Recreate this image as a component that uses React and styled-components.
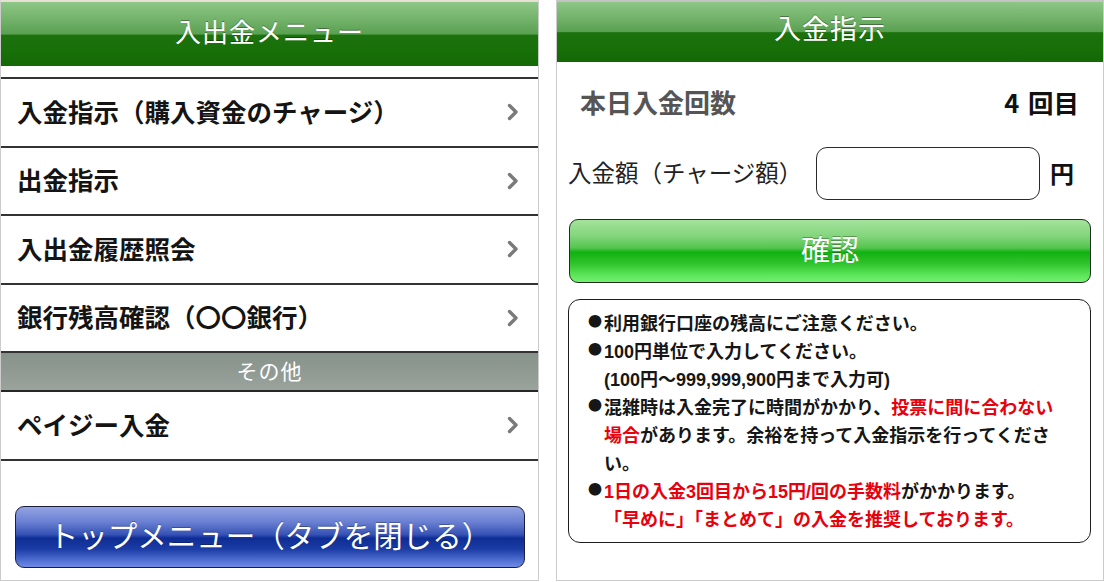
import React from 'react';
import styled, { createGlobalStyle } from 'styled-components';

const GlobalStyle = createGlobalStyle`
  html, body {
    margin: 0;
    padding: 0;
    background: #ffffff;
  }
  body {
    font-family: "Liberation Sans", "Noto Sans CJK JP", sans-serif;
    color: #111111;
  }
`;

const Page = styled.div`
  display: flex;
  gap: 17px;
  width: 1104px;
  height: 582px;
  overflow: hidden;
`;

const Panel = styled.section`
  width: ${props => props.$width}px;
  height: 581px;
  box-sizing: border-box;
  border: 1px solid #cccccc;
  border-top: 2px solid ${props => props.$topColor};
  display: flex;
  flex-direction: column;
  background: #ffffff;
`;

const GreenHeader = styled.header`
  height: ${props => props.$height}px;
  box-sizing: border-box;
  padding-bottom: ${props => props.$lift}px;
  flex-shrink: 0;
  display: flex;
  align-items: center;
  justify-content: center;
  background: linear-gradient(
    to bottom,
    #8dc686 0%,
    #72b26a 28%,
    #5aa052 50%,
    #1c720d 52%,
    #187009 78%,
    #146806 100%
  );
  border-bottom: ${props => (props.$line ? '1px solid #3d4a3a' : 'none')};
  color: #ffffff;
  font-family: "Noto Sans CJK JP", sans-serif;
  font-size: ${props => props.$size}px;
  font-weight: 400;
  text-shadow: 0 -1px 0 rgba(0, 0, 0, 0.35);
  letter-spacing: 1px;
`;

const MenuList = styled.nav`
  margin-top: 11px;
  border-top: 2px solid #333333;
  display: flex;
  flex-direction: column;
`;

const MenuRow = styled.div`
  height: 66.5px;
  box-sizing: content-box;
  border-bottom: 2px solid #333333;
  display: flex;
  align-items: center;
  justify-content: space-between;
  padding: 0 19px 0 16px;
  font-family: "Noto Sans CJK JP", sans-serif;
  font-size: 25.5px;
  font-weight: 700;
  color: #141414;

  & > span {
    margin-top: -4px;
  }
`;

const SectionBar = styled.div`
  height: 39px;
  box-sizing: border-box;
  padding-bottom: 3px;
  display: flex;
  align-items: center;
  justify-content: center;
  border-bottom: 2px solid #262626;
  background: linear-gradient(to bottom, #87928b 0%, #909a93 50%, #9aa39c 100%);
  color: #ffffff;
  font-family: "Noto Sans CJK JP", sans-serif;
  font-size: 21px;
  letter-spacing: 1px;
`;

const BlueButton = styled.button`
  margin: 45px 13px 0 14px;
  height: 62px;
  border: 1px solid #1c1f3c;
  border-radius: 9px;
  background: linear-gradient(
    to bottom,
    #93a3e3 0%,
    #6a80d2 25%,
    #3552b4 46%,
    #0e2d94 52%,
    #1b3ca5 70%,
    #4d6cd0 88%,
    #6e8ce6 100%
  );
  color: #ffffff;
  font-family: "Noto Sans CJK JP", sans-serif;
  font-size: 29.5px;
  font-weight: 400;
  text-shadow: 0 -1px 0 rgba(0, 0, 0, 0.3);
  cursor: pointer;
  padding: 0 0 6px;
`;

const Body = styled.div`
  display: flex;
  flex-direction: column;
  padding: 0 12px 0 11px;
`;

const CountRow = styled.div`
  margin-top: 24px;
  height: 30px;
  display: flex;
  align-items: center;
  justify-content: space-between;
  padding: 0 12px 4px 12px;
  font-family: "Noto Sans CJK JP", sans-serif;
  font-size: 26px;
  font-weight: 700;
`;

const CountLabel = styled.span`
  color: #555555;
`;

const CountValue = styled.span`
  color: #111111;
  font-size: 25.5px;
  word-spacing: 3px;
`;

const AmountRow = styled.div`
  margin-top: 27px;
  height: 53px;
  display: flex;
  align-items: center;
  font-family: "Noto Sans CJK JP", sans-serif;
  font-size: 23.5px;
  color: #222222;
`;

const AmountLabel = styled.span`
  width: 248px;
  margin-top: -4px;
`;

const AmountInput = styled.input`
  width: 224px;
  height: 53px;
  box-sizing: border-box;
  border: 1.5px solid #2a2a2a;
  border-radius: 11px;
  background: #ffffff;
  outline: none;
  font-size: 22px;
  padding: 0 10px;
`;

const Yen = styled.span`
  margin-left: 10px;
  margin-top: -2px;
  font-weight: 700;
  font-size: 24px;
  color: #111111;
`;

const GreenButton = styled.button`
  margin-top: 19px;
  margin-left: 1px;
  height: 64px;
  border: 1px solid #1f2f1f;
  border-radius: 9px;
  background: linear-gradient(
    to bottom,
    #a3e39c 0%,
    #84d67d 25%,
    #55c44f 45%,
    #12b112 52%,
    #2fc32c 70%,
    #5ae458 88%,
    #74f270 100%
  );
  color: #ffffff;
  font-family: "Noto Sans CJK JP", sans-serif;
  font-size: 29px;
  text-shadow: 0 -1px 0 rgba(0, 0, 0, 0.3);
  padding: 0 0 6px;
  cursor: pointer;
`;

const NoteBox = styled.div`
  margin-top: 16px;
  height: 244px;
  box-sizing: border-box;
  border: 1.5px solid #1e1e1e;
  border-radius: 12px;
  padding: 10px 24px 8px 19px;
  font-family: "Liberation Sans", "Noto Sans CJK JP", sans-serif;
  font-size: 18px;
  font-weight: 700;
  line-height: 28px;
  color: #161616;
`;

const Note = styled.p`
  margin: 0;
  padding-left: 16px;
  text-indent: -16px;
`;

const Bullet = styled.span`
  display: inline-block;
  width: 16px;
  text-indent: 0;
  font-family: "Noto Sans CJK JP", sans-serif;
  font-size: 14px;
  vertical-align: 4px;
  line-height: 1;
`;

const Red = styled.span`
  color: #e8000d;
`;

const Chevron = () => (
  <svg width="12" height="18" viewBox="0 0 12 18">
    <polyline
      points="2.5,2.5 9,9 2.5,15.5"
      fill="none"
      stroke="#7a7a7a"
      strokeWidth="3.4"
      strokeLinecap="round"
      strokeLinejoin="round"
    />
  </svg>
);

const menuItems = [
  '入金指示（購入資金のチャージ）',
  '出金指示',
  '入出金履歴照会',
  '銀行残高確認（〇〇銀行）',
];

export default function App() {
  return (
    <>
      <GlobalStyle />
      <Page>
        <Panel $width={539} $topColor="#e6e1d4">
          <GreenHeader $height={64} $size={26} $lift={7}>入出金メニュー</GreenHeader>
          <MenuList>
            {menuItems.map(label => (
              <MenuRow key={label}>
                <span>{label}</span>
                <Chevron />
              </MenuRow>
            ))}
            <SectionBar>その他</SectionBar>
            <MenuRow>
              <span>ペイジー入金</span>
              <Chevron />
            </MenuRow>
          </MenuList>
          <BlueButton>トップメニュー（タブを閉じる）</BlueButton>
        </Panel>

        <Panel $width={548} $topColor="#c4c4c4">
          <GreenHeader $height={60} $size={27} $lift={9} $line>入金指示</GreenHeader>
          <Body>
            <CountRow>
              <CountLabel>本日入金回数</CountLabel>
              <CountValue>4 回目</CountValue>
            </CountRow>
            <AmountRow>
              <AmountLabel>入金額（チャージ額）</AmountLabel>
              <AmountInput type="text" />
              <Yen>円</Yen>
            </AmountRow>
            <GreenButton>確認</GreenButton>
            <NoteBox>
              <Note>
                <Bullet>●</Bullet>利用銀行口座の残高にご注意ください。
              </Note>
              <Note>
                <Bullet>●</Bullet>100円単位で入力してください。
                <br />
                (100円〜999,999,900円まで入力可)
              </Note>
              <Note>
                <Bullet>●</Bullet>混雑時は入金完了に時間がかかり、
                <Red>投票に間に合わない</Red>
                <br />
                <Red>場合</Red>
                <span>があります。余裕を持って入金指示を行ってくださ</span>
                <br />
                <span>い。</span>
              </Note>
              <Note>
                <Bullet>●</Bullet>
                <Red>1日の入金3回目から15円/回の手数料</Red>がかかります。
                <br />
                <Red>「早めに」「まとめて」の入金を推奨しております。</Red>
              </Note>
            </NoteBox>
          </Body>
        </Panel>
      </Page>
    </>
  );
}
